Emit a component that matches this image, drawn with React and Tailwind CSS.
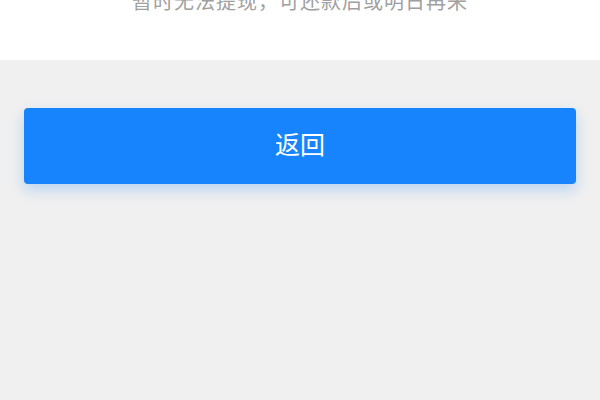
import React from 'react';

const App = () => {
  return (
    <div className="w-[600px] h-[400px] bg-[#f0f0f0] overflow-hidden" style={{ fontFamily: '"Noto Sans CJK SC", "Noto Sans", sans-serif' }}>
      {/* top notice */}
      <div className="h-[60px] bg-white overflow-hidden">
        <p className="-mt-[14px] text-center text-[20px] leading-[30px] text-[#a0a0a0] tracking-[1px]">
          暂时无法提现，可还款后或明日再来
        </p>
      </div>

      {/* back button */}
      <div className="px-6 pt-12">
        <button className="w-full h-[76px] pb-[4px] rounded-[4px] bg-[#1784fd] text-white text-[25px] shadow-[0_6px_14px_rgba(23,132,253,0.25)]">
          返回
        </button>
      </div>
    </div>
  );
};

export default App;
